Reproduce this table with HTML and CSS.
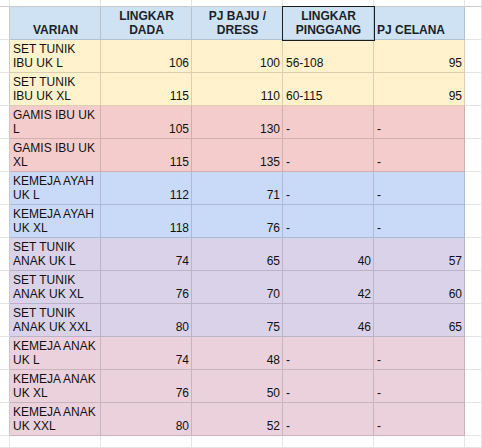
FILE: index.html
```html
<!DOCTYPE html>
<html lang="id">
<head>
<meta charset="utf-8">
<title>Ukuran</title>
<link rel="stylesheet" href="styles.css">
</head>
<body>
<div class="sheet">
  <div class="row top"><div class="c"></div><div class="c"></div><div class="c"></div><div class="c"></div><div class="c"></div><div class="c"></div><div class="c"></div></div>

  <div class="row hdr">
    <div class="c edge"></div>
    <div class="c d h center">VARIAN</div>
    <div class="c d h center">LINGKAR DADA</div>
    <div class="c d h center">PJ BAJU / DRESS</div>
    <div class="c d h center sel">LINGKAR PINGGANG</div>
    <div class="c d h">PJ CELANA</div>
    <div class="c"></div>
  </div>

  <div class="row yel">
    <div class="c edge"></div>
    <div class="c d">SET TUNIK<br>IBU UK L</div>
    <div class="c d num">106</div>
    <div class="c d num">100</div>
    <div class="c d">56-108</div>
    <div class="c d num">95</div>
    <div class="c"></div>
  </div>
  <div class="row yel">
    <div class="c edge"></div>
    <div class="c d">SET TUNIK<br>IBU UK XL</div>
    <div class="c d num">115</div>
    <div class="c d num">110</div>
    <div class="c d">60-115</div>
    <div class="c d num">95</div>
    <div class="c"></div>
  </div>

  <div class="row red">
    <div class="c edge"></div>
    <div class="c d">GAMIS IBU UK<br>L</div>
    <div class="c d num">105</div>
    <div class="c d num">130</div>
    <div class="c d">-</div>
    <div class="c d">-</div>
    <div class="c"></div>
  </div>
  <div class="row red">
    <div class="c edge"></div>
    <div class="c d">GAMIS IBU UK<br>XL</div>
    <div class="c d num">115</div>
    <div class="c d num">135</div>
    <div class="c d">-</div>
    <div class="c d">-</div>
    <div class="c"></div>
  </div>

  <div class="row blue">
    <div class="c edge"></div>
    <div class="c d">KEMEJA AYAH<br>UK L</div>
    <div class="c d num">112</div>
    <div class="c d num">71</div>
    <div class="c d">-</div>
    <div class="c d">-</div>
    <div class="c"></div>
  </div>
  <div class="row blue">
    <div class="c edge"></div>
    <div class="c d">KEMEJA AYAH<br>UK XL</div>
    <div class="c d num">118</div>
    <div class="c d num">76</div>
    <div class="c d">-</div>
    <div class="c d">-</div>
    <div class="c"></div>
  </div>

  <div class="row purple">
    <div class="c edge"></div>
    <div class="c d">SET TUNIK<br>ANAK UK L</div>
    <div class="c d num">74</div>
    <div class="c d num">65</div>
    <div class="c d num">40</div>
    <div class="c d num">57</div>
    <div class="c"></div>
  </div>
  <div class="row purple">
    <div class="c edge"></div>
    <div class="c d">SET TUNIK<br>ANAK UK XL</div>
    <div class="c d num">76</div>
    <div class="c d num">70</div>
    <div class="c d num">42</div>
    <div class="c d num">60</div>
    <div class="c"></div>
  </div>
  <div class="row purple">
    <div class="c edge"></div>
    <div class="c d">SET TUNIK<br>ANAK UK XXL</div>
    <div class="c d num">80</div>
    <div class="c d num">75</div>
    <div class="c d num">46</div>
    <div class="c d num">65</div>
    <div class="c"></div>
  </div>

  <div class="row pink">
    <div class="c edge"></div>
    <div class="c d">KEMEJA ANAK<br>UK L</div>
    <div class="c d num">74</div>
    <div class="c d num">48</div>
    <div class="c d">-</div>
    <div class="c d">-</div>
    <div class="c"></div>
  </div>
  <div class="row pink">
    <div class="c edge"></div>
    <div class="c d">KEMEJA ANAK<br>UK XL</div>
    <div class="c d num">76</div>
    <div class="c d num">50</div>
    <div class="c d">-</div>
    <div class="c d">-</div>
    <div class="c"></div>
  </div>
  <div class="row pink">
    <div class="c edge"></div>
    <div class="c d">KEMEJA ANAK<br>UK XXL</div>
    <div class="c d num">80</div>
    <div class="c d num">52</div>
    <div class="c d">-</div>
    <div class="c d">-</div>
    <div class="c"></div>
  </div>

  <div class="row bottom"><div class="c"></div><div class="c"></div><div class="c"></div><div class="c"></div><div class="c"></div><div class="c"></div><div class="c"></div></div>
</div>
</body>
</html>
```

FILE: styles.css
```css
* {
  box-sizing: border-box;
}

html, body {
  margin: 0;
  padding: 0;
  background: #ffffff;
}

body {
  font-family: "Liberation Sans", Arial, sans-serif;
  font-size: 12px;
  line-height: 13.5px;
  color: #000000;
}

.sheet {
  display: grid;
  grid-template-columns: 10px repeat(5, 91px) 1fr;
  grid-template-rows: 7px repeat(13, 33px) 1fr;
  height: 448px;
  overflow: hidden;
}

.row {
  display: contents;
}

.c {
  border-right: 1px solid #e2e3e3;
  border-bottom: 1px solid #e2e3e3;
  min-width: 0;
}

.top .c {
  border-bottom-color: #c9c9c9;
}

.edge {
  border-right-color: #c9c9c9;
}

.hdr { --bg: #cfe2f3; }
.yel { --bg: #fff2cc; }
.red { --bg: #f4cccc; }
.blue { --bg: #c9daf8; }
.purple { --bg: #d9d2e9; }
.pink { --bg: #ead1dc; }

.d {
  background: var(--bg);
  border-right-color: rgba(0, 0, 0, 0.14);
  border-bottom-color: rgba(0, 0, 0, 0.14);
  display: flex;
  flex-direction: column;
  justify-content: flex-end;
  padding: 0 2px 2px 3px;
  white-space: nowrap;
  overflow: hidden;
  color: #111111;
}

.h {
  font-weight: bold;
  white-space: normal;
  color: #1a1f2a;
}

.center {
  text-align: center;
}

.num {
  text-align: right;
}

.sel {
  z-index: 1;
  overflow: visible;
  outline: 1px solid #1c1c1c;
}
```
